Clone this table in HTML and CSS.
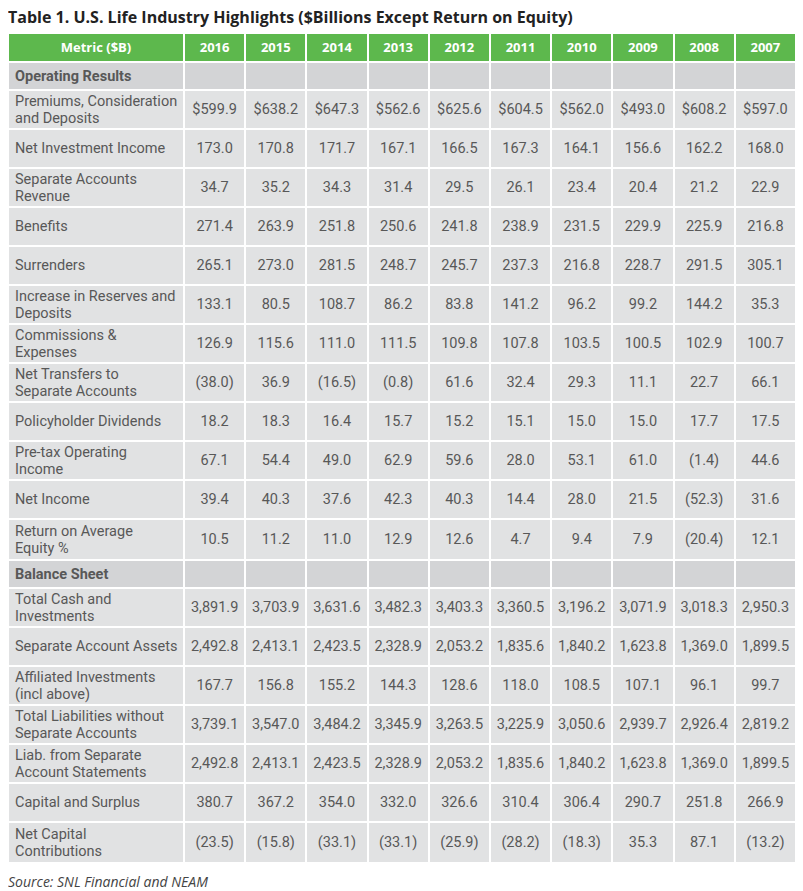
FILE: index.html
```html
<!DOCTYPE html>
<html>
<head>
<meta charset="utf-8">
<link rel="stylesheet" href="styles.css">
</head>
<body>
<h1 class="title">Table 1. U.S. Life Industry Highlights ($Billions Except Return on Equity)</h1>
<table class="data">
<colgroup>
<col class="c-metric">
<col><col><col><col><col><col><col><col><col><col>
</colgroup>
<thead>
<tr><th>Metric ($B)</th><th>2016</th><th>2015</th><th>2014</th><th>2013</th><th>2012</th><th>2011</th><th>2010</th><th>2009</th><th>2008</th><th>2007</th></tr>
</thead>
<tbody>
<tr class="section"><td>Operating Results</td><td></td><td></td><td></td><td></td><td></td><td></td><td></td><td></td><td></td><td></td></tr>
<tr><td>Premiums, Consideration<br>and Deposits</td><td>$599.9</td><td>$638.2</td><td>$647.3</td><td>$562.6</td><td>$625.6</td><td>$604.5</td><td>$562.0</td><td>$493.0</td><td>$608.2</td><td>$597.0</td></tr>
<tr><td>Net Investment Income</td><td>173.0</td><td>170.8</td><td>171.7</td><td>167.1</td><td>166.5</td><td>167.3</td><td>164.1</td><td>156.6</td><td>162.2</td><td>168.0</td></tr>
<tr><td>Separate Accounts<br>Revenue</td><td>34.7</td><td>35.2</td><td>34.3</td><td>31.4</td><td>29.5</td><td>26.1</td><td>23.4</td><td>20.4</td><td>21.2</td><td>22.9</td></tr>
<tr><td>Benefits</td><td>271.4</td><td>263.9</td><td>251.8</td><td>250.6</td><td>241.8</td><td>238.9</td><td>231.5</td><td>229.9</td><td>225.9</td><td>216.8</td></tr>
<tr><td>Surrenders</td><td>265.1</td><td>273.0</td><td>281.5</td><td>248.7</td><td>245.7</td><td>237.3</td><td>216.8</td><td>228.7</td><td>291.5</td><td>305.1</td></tr>
<tr><td>Increase in Reserves and<br>Deposits</td><td>133.1</td><td>80.5</td><td>108.7</td><td>86.2</td><td>83.8</td><td>141.2</td><td>96.2</td><td>99.2</td><td>144.2</td><td>35.3</td></tr>
<tr><td>Commissions &amp;<br>Expenses</td><td>126.9</td><td>115.6</td><td>111.0</td><td>111.5</td><td>109.8</td><td>107.8</td><td>103.5</td><td>100.5</td><td>102.9</td><td>100.7</td></tr>
<tr><td>Net Transfers to<br>Separate Accounts</td><td>(38.0)</td><td>36.9</td><td>(16.5)</td><td>(0.8)</td><td>61.6</td><td>32.4</td><td>29.3</td><td>11.1</td><td>22.7</td><td>66.1</td></tr>
<tr><td>Policyholder Dividends</td><td>18.2</td><td>18.3</td><td>16.4</td><td>15.7</td><td>15.2</td><td>15.1</td><td>15.0</td><td>15.0</td><td>17.7</td><td>17.5</td></tr>
<tr><td>Pre-tax Operating<br>Income</td><td>67.1</td><td>54.4</td><td>49.0</td><td>62.9</td><td>59.6</td><td>28.0</td><td>53.1</td><td>61.0</td><td>(1.4)</td><td>44.6</td></tr>
<tr><td>Net Income</td><td>39.4</td><td>40.3</td><td>37.6</td><td>42.3</td><td>40.3</td><td>14.4</td><td>28.0</td><td>21.5</td><td>(52.3)</td><td>31.6</td></tr>
<tr class="tall"><td>Return on Average<br>Equity %</td><td>10.5</td><td>11.2</td><td>11.0</td><td>12.9</td><td>12.6</td><td>4.7</td><td>9.4</td><td>7.9</td><td>(20.4)</td><td>12.1</td></tr>
<tr class="section"><td>Balance Sheet</td><td></td><td></td><td></td><td></td><td></td><td></td><td></td><td></td><td></td><td></td></tr>
<tr><td>Total Cash and<br>Investments</td><td>3,891.9</td><td>3,703.9</td><td>3,631.6</td><td>3,482.3</td><td>3,403.3</td><td>3,360.5</td><td>3,196.2</td><td>3,071.9</td><td>3,018.3</td><td>2,950.3</td></tr>
<tr><td>Separate Account Assets</td><td>2,492.8</td><td>2,413.1</td><td>2,423.5</td><td>2,328.9</td><td>2,053.2</td><td>1,835.6</td><td>1,840.2</td><td>1,623.8</td><td>1,369.0</td><td>1,899.5</td></tr>
<tr><td>Affiliated Investments<br>(incl above)</td><td>167.7</td><td>156.8</td><td>155.2</td><td>144.3</td><td>128.6</td><td>118.0</td><td>108.5</td><td>107.1</td><td>96.1</td><td>99.7</td></tr>
<tr><td>Total Liabilities without<br>Separate Accounts</td><td>3,739.1</td><td>3,547.0</td><td>3,484.2</td><td>3,345.9</td><td>3,263.5</td><td>3,225.9</td><td>3,050.6</td><td>2,939.7</td><td>2,926.4</td><td>2,819.2</td></tr>
<tr><td>Liab. from Separate<br>Account Statements</td><td>2,492.8</td><td>2,413.1</td><td>2,423.5</td><td>2,328.9</td><td>2,053.2</td><td>1,835.6</td><td>1,840.2</td><td>1,623.8</td><td>1,369.0</td><td>1,899.5</td></tr>
<tr><td>Capital and Surplus</td><td>380.7</td><td>367.2</td><td>354.0</td><td>332.0</td><td>326.6</td><td>310.4</td><td>306.4</td><td>290.7</td><td>251.8</td><td>266.9</td></tr>
<tr class="tall"><td>Net Capital<br>Contributions</td><td>(23.5)</td><td>(15.8)</td><td>(33.1)</td><td>(33.1)</td><td>(25.9)</td><td>(28.2)</td><td>(18.3)</td><td>35.3</td><td>87.1</td><td>(13.2)</td></tr>
</tbody>
</table>
<p class="source">Source: SNL Financial and NEAM</p>
</body>
</html>
```

FILE: styles.css
```css
body {
  margin: 8px;
  font-family: "Open Sans", "DejaVu Sans", sans-serif;
  background: #fff;
}
.title {
  margin: 0 0 5px 0;
  font-size: 16px;
  line-height: 19px;
  font-weight: 700;
  color: #222;
}
.data {
  width: 790px;
  margin-left: -1px;
  border-collapse: collapse;
  table-layout: fixed;
  font-family: Roboto, "Open Sans", sans-serif;
  font-size: 14.5px;
  color: #585858;
}
.data col.c-metric { width: 176px; }
.data th, .data td {
  border: 2px solid #fff;
  padding: 0 2px;
  text-align: center;
  line-height: 17px;
  white-space: nowrap;
}
.data th {
  background: #5db84d;
  color: #fff;
  font-family: "Open Sans", sans-serif;
  font-size: 13px;
  font-weight: 700;
  height: 27px;
}
.data td {
  background: #e1e2e3;
  height: 37px;
}
.data td:first-child {
  text-align: left;
  padding-left: 6px;
}
.data tr.tall td {
  height: 39px;
}
.data tr.section td {
  background: #d3d4d6;
  height: 26px;
  font-weight: 700;
}
.source {
  margin: 8px 0 0 0;
  font-size: 14px;
  font-style: italic;
  color: #444;
}
```
